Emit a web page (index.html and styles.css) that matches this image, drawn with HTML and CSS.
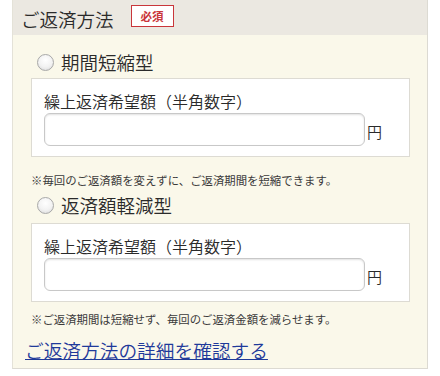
FILE: index.html
```html
<!DOCTYPE html>
<html lang="ja">
<head>
<meta charset="utf-8">
<link rel="stylesheet" href="styles.css">
</head>
<body>
<div class="panel">
  <div class="head">
    <span class="title">ご返済方法</span>
    <span class="badge">必須</span>
  </div>
  <div class="content">
    <label class="radio"><span class="dot"></span><span>期間短縮型</span></label>
    <div class="box">
      <div class="label">繰上返済希望額（半角数字）</div>
      <div class="field"><span class="input"></span><span class="yen">円</span></div>
    </div>
    <p class="note n1">※毎回のご返済額を変えずに、ご返済期間を短縮できます。</p>
    <label class="radio r2"><span class="dot"></span><span>返済額軽減型</span></label>
    <div class="box">
      <div class="label">繰上返済希望額（半角数字）</div>
      <div class="field"><span class="input"></span><span class="yen">円</span></div>
    </div>
    <p class="note n2">※ご返済期間は短縮せず、毎回のご返済金額を減らせます。</p>
    <a class="link" href="#">ご返済方法の詳細を確認する</a>
  </div>
</div>
</body>
</html>
```
FILE: styles.css
```css
* { box-sizing: border-box; }
body {
  margin: 0;
  background: #fff;
  font-family: "Noto Sans CJK JP", "Noto Sans", sans-serif;
  color: #333;
}
.panel {
  margin-left: 12px;
  width: 416px;
  height: 369px;
  background: #faf8ea;
  border-left: 1px solid #e4e2d8;
  border-right: 1px solid #dcdad2;
  border-bottom: 1px solid #dcdad2;
}
.head {
  height: 35px;
  background: #ebe8e1;
  display: flex;
  align-items: center;
  padding-left: 8px;
}
.title {
  font-size: 18.5px;
  line-height: 22px;
  font-weight: 350;
  color: #2a2a2a;
  margin-top: 3px;
}
.badge {
  margin-left: 17px;
  border: 1px solid #c9363a;
  background: #fff;
  color: #c9363a;
  font-size: 11.5px;
  font-weight: bold;
  line-height: 20px;
  padding: 0 9px;
  margin-top: -4px;
}
.content {
  padding: 11px 17px 0 18px;
}
.radio {
  display: flex;
  align-items: center;
  height: 32px;
  padding-left: 6px;
  font-size: 18.5px;
  font-weight: 350;
  color: #2a2a2a;
}
.r2 { margin-top: 1px; }
.dot {
  width: 17px;
  height: 17px;
  border-radius: 50%;
  border: 1px solid #a8a8a8;
  background: radial-gradient(circle at 50% 35%, #fff 0%, #f2f2f2 55%, #d6d6d6 100%);
  margin-right: 7px;
}
.r2 + .box { margin-top: 2px; }
.box {
  background: #fff;
  border: 1px solid #dddbd3;
  padding: 11px 12px 10px 12px;
}
.label {
  font-size: 16px;
  line-height: 22px;
  font-weight: 350;
  color: #2a2a2a;
}
.field {
  display: flex;
  align-items: center;
  margin-top: 1px;
}
.input {
  display: block;
  width: 321px;
  height: 33px;
  border: 1px solid #c8c8c8;
  border-radius: 6px;
  background: #fff;
  box-shadow: inset 0 1px 2px rgba(0,0,0,0.12);
}
.yen {
  font-size: 15px;
  font-weight: 350;
  margin-left: 2px;
  margin-top: 3px;
  color: #2a2a2a;
}
.note {
  margin: 0;
  font-size: 11.4px;
  line-height: 16px;
  color: #3a3a3a;
}
.n1 { margin-top: 15px; }
.n2 { margin-top: 9px; }
.link {
  display: block;
  margin-top: 10px;
  margin-left: -6px;
  font-size: 18.7px;
  line-height: 26px;
  font-weight: 350;
  color: #1f3a9a;
  text-decoration: underline;
}
```
